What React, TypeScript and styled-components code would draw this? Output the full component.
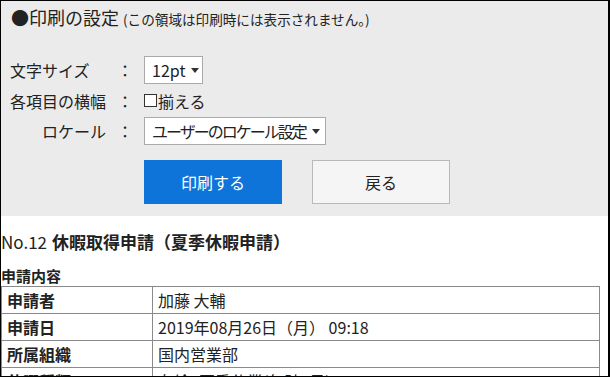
import React from "react";
import styled, { createGlobalStyle } from "styled-components";

const Global = createGlobalStyle`
  html, body { margin: 0; padding: 0; background: #fff; }
  body { font-family: "Noto Sans CJK JP", "Noto Sans", sans-serif; color: #222; }
`;

const Frame = styled.div`
  width: 610px;
  height: 377px;
  box-sizing: border-box;
  border: 1px solid #000;
  border-right-width: 2px;
  overflow: hidden;
  background: #fff;
`;

const Panel = styled.section`
  background: #ebebeb;
  padding: 4px 0 12px 0;
`;

const Title = styled.div`
  display: flex;
  align-items: baseline;
  height: 24px;
  line-height: 24px;
  padding-left: 10px;
  font-size: 18px;
  color: #222;
`;

const Note = styled.span`
  font-size: 13.6px;
  margin-left: 4px;
`;

const Form = styled.div`
  margin-top: 27px;
  display: flex;
  flex-direction: column;
  gap: 4px;
`;

const Row = styled.div<{ $h: number }>`
  display: flex;
  align-items: center;
  height: ${(p) => p.$h}px;
  font-size: 16px;
`;

const Label = styled.div<{ $align: "left" | "right" }>`
  box-sizing: border-box;
  width: 105px;
  padding-left: 9px;
  text-align: ${(p) => p.$align};
  white-space: nowrap;
  line-height: 20px;
`;

const Colon = styled.div`
  width: 38px;
  text-align: center;
  line-height: 20px;
`;

const Select = styled.div<{ $w: number; $tight?: boolean }>`
  box-sizing: border-box;
  width: ${(p) => p.$w}px;
  height: 28px;
  border: 1px solid #aaa;
  background: #fff;
  display: flex;
  align-items: center;
  padding-left: 7px;
  font-size: 16px;
  line-height: 20px;
  white-space: nowrap;
  letter-spacing: ${(p) => (p.$tight ? "-2px" : "0")};
`;

const Caret = styled.span`
  width: 0;
  height: 0;
  margin-left: 6px;
  margin-top: 1px;
  border-left: 4px solid transparent;
  border-right: 4px solid transparent;
  border-top: 5px solid #333;
`;

const Check = styled.span`
  box-sizing: border-box;
  width: 13px;
  height: 13px;
  border: 1px solid #333;
  background: #fff;
  margin-right: 1px;
`;

const CheckText = styled.span`
  line-height: 20px;
`;

const Buttons = styled.div`
  display: flex;
  gap: 30px;
  margin-top: 15px;
  padding-left: 143px;
`;

const Button = styled.div<{ $primary?: boolean }>`
  box-sizing: border-box;
  width: 138px;
  height: 44px;
  display: flex;
  align-items: center;
  justify-content: center;
  font-size: 16px;
  background: ${(p) => (p.$primary ? "#0f74da" : "#f5f5f5")};
  color: ${(p) => (p.$primary ? "#fff" : "#222")};
  border: ${(p) => (p.$primary ? "none" : "1px solid #b9b9b9")};
`;

const Heading = styled.h1`
  margin: 13px 0 0 0;
  height: 26px;
  line-height: 26px;
  font-size: 17px;
  font-weight: normal;
  color: #222;
  white-space: nowrap;
`;

const No = styled.span`
  font-size: 17px;
  margin-right: 5px;
`;

const Strong = styled.span`
  font-weight: bold;
`;

const SubHeading = styled.h2`
  margin: 11px 0 0 0;
  height: 20px;
  line-height: 20px;
  font-size: 15px;
  font-weight: bold;
  color: #222;
`;

const Table = styled.table`
  border-collapse: collapse;
  width: 599px;
  table-layout: fixed;
  font-size: 16px;
`;

const Th = styled.th`
  width: 140px;
  height: 26px;
  padding: 0 5px;
  border: 1px solid #8a8a8a;
  text-align: left;
  font-weight: bold;
  line-height: 20px;
  white-space: nowrap;
`;

const Td = styled.td`
  height: 26px;
  padding: 0 5px;
  border: 1px solid #8a8a8a;
  line-height: 20px;
  white-space: nowrap;
`;

const rows: [string, string][] = [
  ["申請者", "加藤 大輔"],
  ["申請日", "2019年08月26日（月） 09:18"],
  ["所属組織", "国内営業部"],
  ["休暇種類", "有給_夏季休業(年計3日)"],
  ["期間", "2019年08月26日"],
];

export default function App() {
  return (
    <>
      <Global />
      <Frame>
        <Panel>
          <Title>
            ●印刷の設定<Note>(この領域は印刷時には表示されません。)</Note>
          </Title>
          <Form>
            <Row $h={28}>
              <Label $align="left">文字サイズ</Label>
              <Colon>：</Colon>
              <Select $w={59}>
                12pt<Caret />
              </Select>
            </Row>
            <Row $h={25}>
              <Label $align="left">各項目の横幅</Label>
              <Colon>：</Colon>
              <Check />
              <CheckText>揃える</CheckText>
            </Row>
            <Row $h={28}>
              <Label $align="right">ロケール</Label>
              <Colon>：</Colon>
              <Select $w={182} $tight>
                ユーザーのロケール設定<Caret />
              </Select>
            </Row>
          </Form>
          <Buttons>
            <Button $primary>印刷する</Button>
            <Button>戻る</Button>
          </Buttons>
        </Panel>
        <Heading>
          <No>No.12</No>
          <Strong>休暇取得申請（夏季休暇申請）</Strong>
        </Heading>
        <SubHeading>申請内容</SubHeading>
        <Table>
          <tbody>
            {rows.map(([k, v]) => (
              <tr key={k}>
                <Th>{k}</Th>
                <Td>{v}</Td>
              </tr>
            ))}
          </tbody>
        </Table>
      </Frame>
    </>
  );
}
